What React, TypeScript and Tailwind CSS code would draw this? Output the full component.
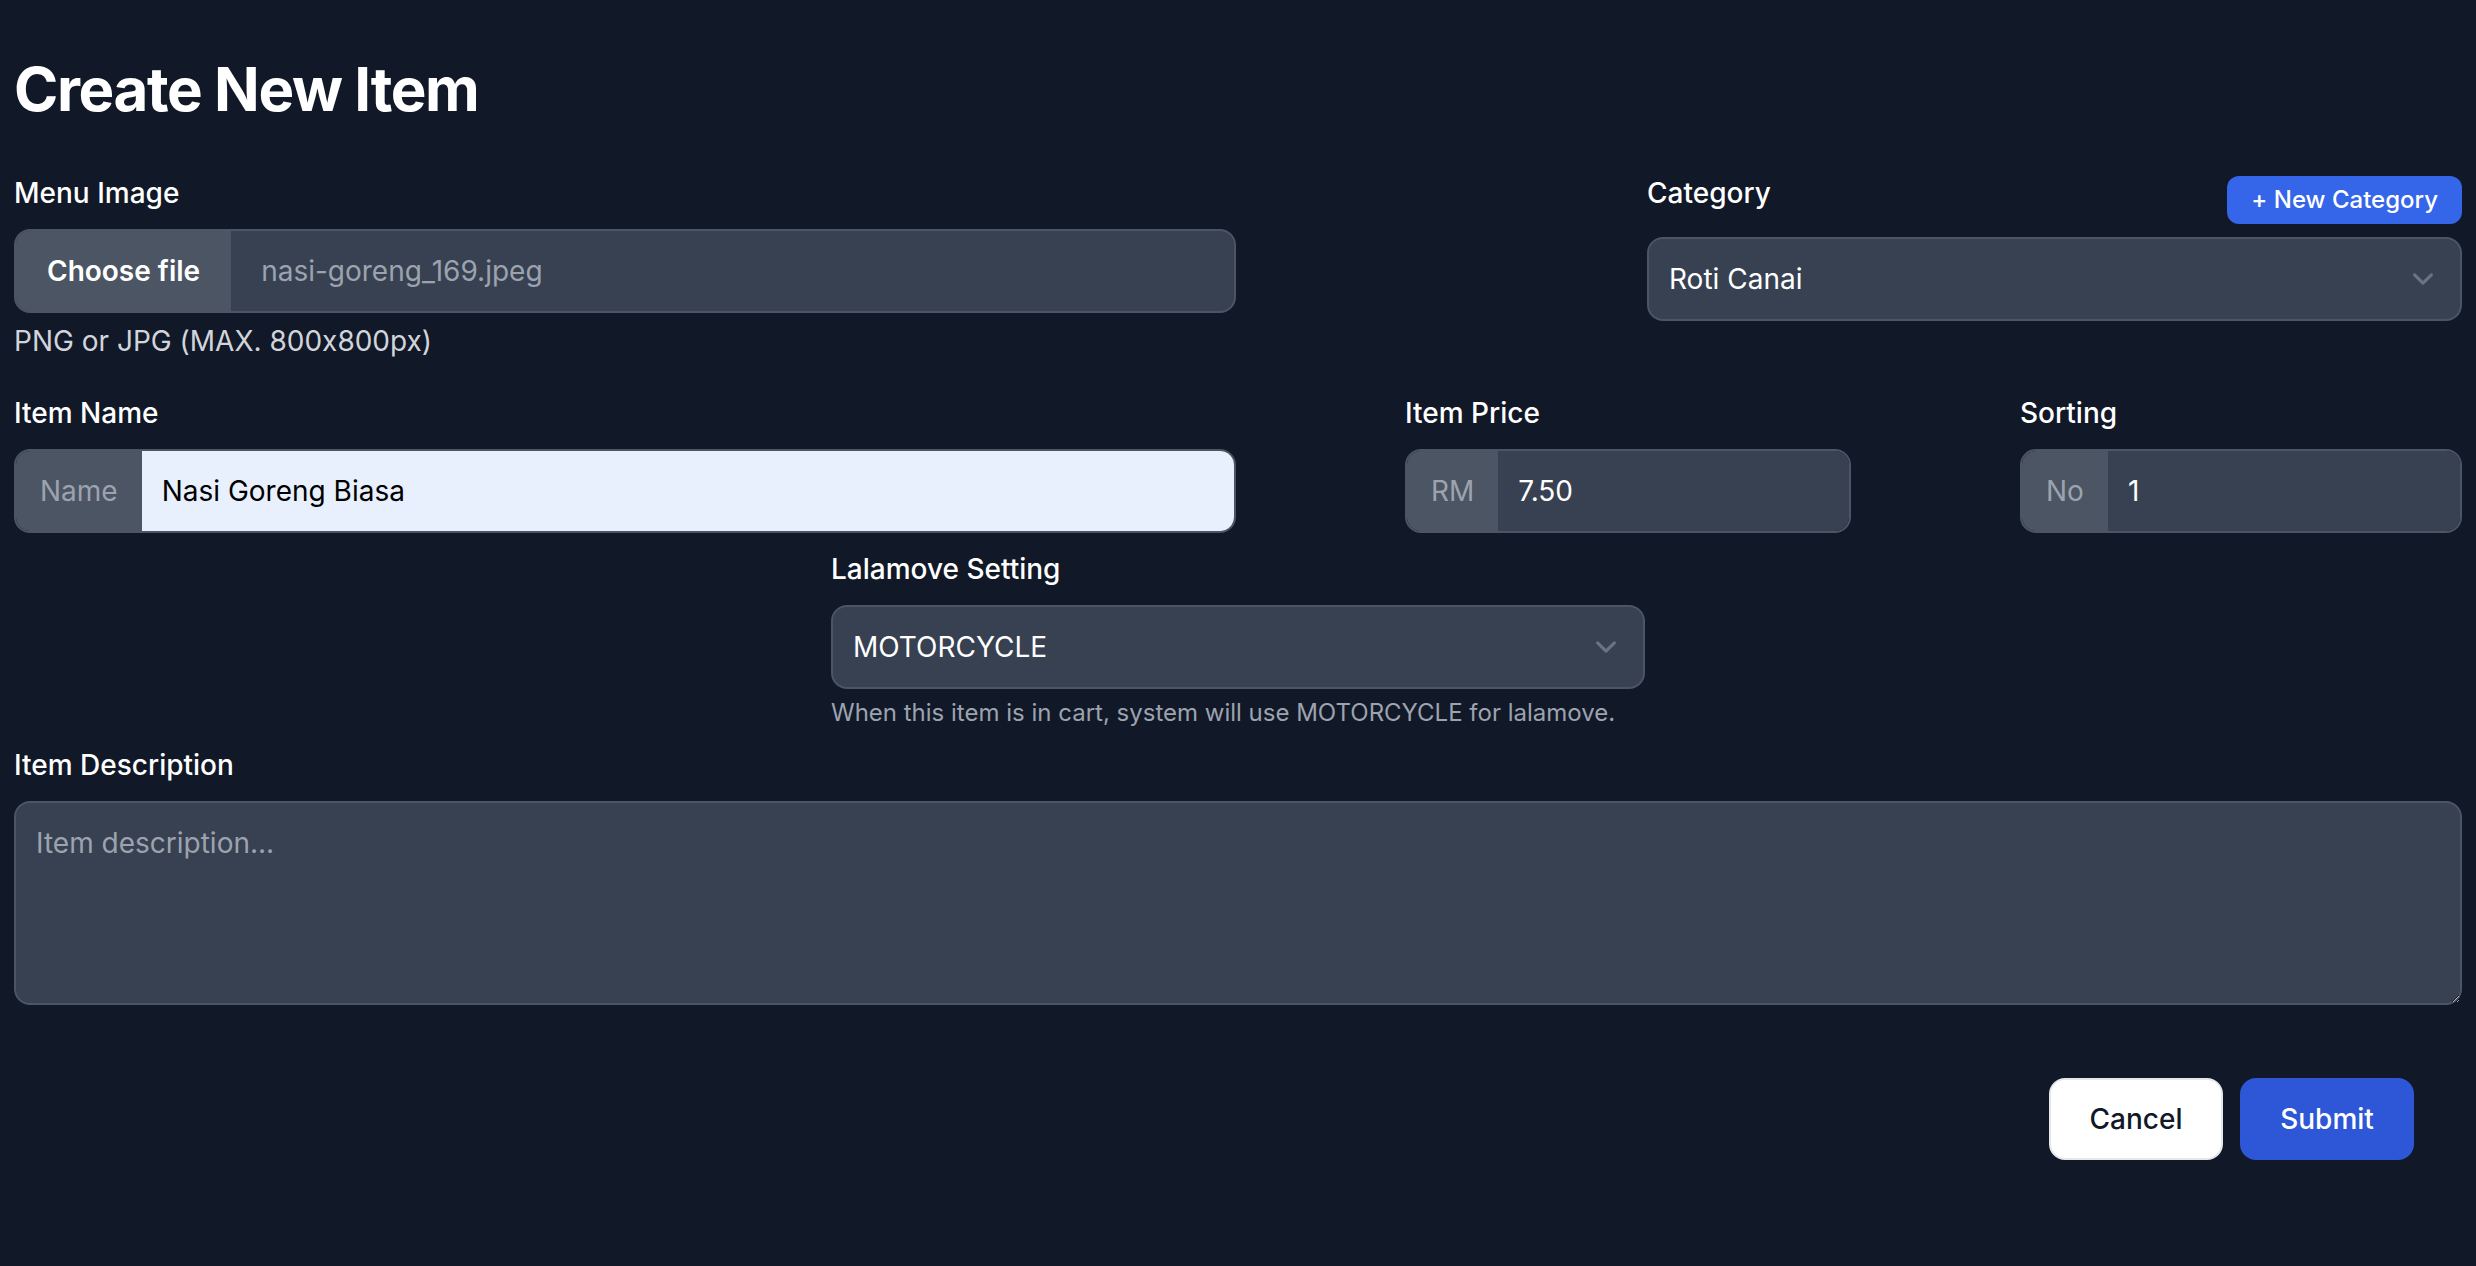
import React from 'react';

const labelCls = 'block text-[28px] leading-[40px] font-medium text-white';

const Chevron = () => (
  <svg
    viewBox="0 0 20 20"
    className="absolute right-[16px] top-1/2 -translate-y-1/2 w-[42px] h-[42px]"
    fill="none"
  >
    <path d="M6 8l4 4 4-4" stroke="#6b7280" strokeWidth="1.5" strokeLinecap="round" strokeLinejoin="round" />
  </svg>
);

const SelectBox = ({ value }: { value: string }) => (
  <div className="relative h-[84px] w-full rounded-[16px] border-2 border-[#4b5563] bg-[#374151] px-[20px] py-[20px] text-[28px] leading-[40px] text-white">
    {value}
    <Chevron />
  </div>
);

const AddonInput = ({
  addon,
  value,
  light,
}: {
  addon: string;
  value: string;
  light?: boolean;
}) => (
  <div className="flex h-[84px] w-full overflow-hidden rounded-[16px] border-2 border-[#4b5563]">
    <span className="flex items-center bg-[#4b5563] px-[24px] text-[28px] leading-[40px] text-[#9ca3af]">
      {addon}
    </span>
    <input
      readOnly
      value={value}
      className={
        light
          ? 'min-w-0 flex-1 bg-[#e8f0fe] px-[20px] text-[28px] leading-[40px] text-black outline-none'
          : 'min-w-0 flex-1 bg-[#374151] px-[20px] text-[28px] leading-[40px] text-white outline-none'
      }
    />
  </div>
);

export default function App() {
  return (
    <div className="min-h-screen bg-[#111827] px-[14px] pt-[53px] font-['Inter','Noto_Sans',sans-serif] [font-feature-settings:'calt'_0]">
      <h1 className="text-[60px] leading-[72px] font-bold tracking-[-1.4px] text-white">Create New Item</h1>

      {/* Image + category */}
      <div className="mt-[48px] flex items-start justify-between">
        <div className="w-[1222px]">
          <label className={labelCls + ' mb-[16px]'}>Menu Image</label>
          <div className="flex h-[84px] overflow-hidden rounded-[16px] border-2 border-[#4b5563] bg-[#374151]">
            <span className="flex items-center bg-[#4b5563] px-[31px] text-[28px] leading-[40px] font-semibold text-white">
              Choose file
            </span>
            <span className="ml-[30px] flex items-center text-[28px] leading-[40px] text-[#9ca3af]">
              nasi-goreng_169.jpeg
            </span>
          </div>
          <p className="mt-[8px] text-[28px] leading-[40px] text-[#d1d5db]">PNG or JPG (MAX. 800x800px)</p>
        </div>

        <div className="w-[815px]">
          <div className="flex h-[51px] items-start justify-between">
            <label className={labelCls}>Category</label>
            <button className="mt-[3px] h-[48px] rounded-[12px] bg-[#3565e9] px-[24px] text-[24px] leading-[32px] font-medium text-white">
              + New Category
            </button>
          </div>
          <div className="mt-[13px]">
            <SelectBox value="Roti Canai" />
          </div>
        </div>
      </div>

      {/* Name, price, sorting */}
      <div className="mt-[32px] flex items-start justify-between">
        <div className="w-[1222px]">
          <label className={labelCls + ' mb-[16px]'}>Item Name</label>
          <AddonInput addon="Name" value="Nasi Goreng Biasa" light />
        </div>
        <div className="w-[446px]">
          <label className={labelCls + ' mb-[16px]'}>Item Price</label>
          <AddonInput addon="RM" value="7.50" />
        </div>
        <div className="w-[442px]">
          <label className={labelCls + ' mb-[16px]'}>Sorting</label>
          <AddonInput addon="No" value="1" />
        </div>
      </div>

      {/* Lalamove */}
      <div className="mx-auto mt-[16px] w-[814px]">
        <label className={labelCls + ' mb-[16px]'}>Lalamove Setting</label>
        <SelectBox value="MOTORCYCLE" />
        <p className="mt-[8px] text-[24px] leading-[32px] text-[#9ca3af]">
          When this item is in cart, system will use MOTORCYCLE for lalamove.
        </p>
      </div>

      {/* Description */}
      <div className="mt-[16px]">
        <label className={labelCls + ' mb-[16px]'}>Item Description</label>
        <textarea
          rows={4}
          placeholder="Item description..."
          className="block h-[204px] w-full rounded-[16px] border-2 border-[#4b5563] bg-[#374151] p-[20px] text-[28px] leading-[40px] text-white outline-none placeholder:text-[#9ca3af]"
        />
      </div>

      <div className="mt-[73px] flex justify-end gap-[17px] pr-[48px]">
        <button className="h-[82px] w-[174px] rounded-[16px] border-2 border-[#e5e7eb] bg-white text-[28px] leading-[40px] font-medium text-[#111827]">
          Cancel
        </button>
        <button className="h-[82px] w-[174px] rounded-[16px] bg-[#2d57d6] text-[28px] leading-[40px] font-medium text-white">
          Submit
        </button>
      </div>
    </div>
  );
}
